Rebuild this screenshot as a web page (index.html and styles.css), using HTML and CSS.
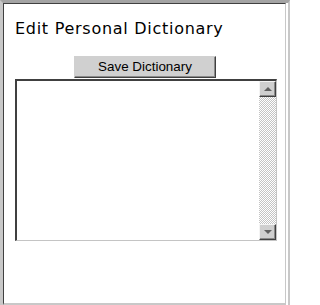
FILE: index.html
```html
<!DOCTYPE html>
<html>
<head>
<meta charset="utf-8">
<link rel="stylesheet" href="styles.css">
</head>
<body>
<div class="frame">
  <div class="panel">
    <h1 class="title">Edit Personal Dictionary</h1>
    <div class="actions">
      <button class="btn" type="button">Save Dictionary</button>
    </div>
    <div class="editor">
      <div class="editor-area"></div>
      <div class="scrollbar">
        <div class="sb-btn"><span class="arrow up"></span></div>
        <div class="sb-track"></div>
        <div class="sb-btn"><span class="arrow down"></span></div>
      </div>
    </div>
  </div>
</div>
</body>
</html>
```
FILE: styles.css
```css
html, body {
  margin: 0;
  padding: 0;
  background: #ffffff;
}
body {
  width: 290px;
  height: 305px;
  overflow: hidden;
}
.frame {
  box-sizing: border-box;
  width: 290px;
  height: 305px;
  border-top: 3px solid #a4a4a4;
  border-left: 3px solid #c8c8c8;
  border-right: 2px solid #c8c8c8;
  padding-right: 2px;
  background: #ffffff;
  display: flex;
}
.panel {
  box-sizing: border-box;
  flex: 1;
  border-top: 1px solid #404040;
  border-left: 1px solid #404040;
  border-right: 1px solid #c8c8c8;
  border-bottom: 2px solid #c8c8c8;
  padding: 15px 8px 0 11px;
  display: flex;
  flex-direction: column;
}
.title {
  margin: 0;
  font-family: "DejaVu Sans", Verdana, sans-serif;
  font-weight: normal;
  font-size: 16px;
  line-height: 19px;
  letter-spacing: 0.72px;
  color: #000000;
}
.actions {
  margin-top: 18px;
  display: flex;
  padding-left: 59px;
}
.btn {
  box-sizing: border-box;
  width: 142px;
  height: 22px;
  margin: 0;
  padding: 0 0 1px 0;
  background: #d0d0d0;
  border-style: solid;
  border-width: 1px;
  border-color: #d0d0d0 #404040 #404040 #d0d0d0;
  box-shadow: inset -1px -1px 0 #8a8a8a;
  font-family: "Liberation Sans", Arial, sans-serif;
  font-size: 13.4px;
  color: #000000;
}
.editor {
  box-sizing: border-box;
  margin-top: 1px;
  width: 262px;
  height: 162px;
  border-top: 2px solid #404040;
  border-left: 2px solid #404040;
  border-right: 1px solid #c4c4c4;
  border-bottom: 1px solid #c4c4c4;
  display: flex;
  background: #ffffff;
}
.editor-area {
  flex: 1;
}
.scrollbar {
  width: 17px;
  display: flex;
  flex-direction: column;
}
.sb-btn {
  box-sizing: border-box;
  height: 16px;
  background: #cfcfcf;
  border-style: solid;
  border-width: 1px;
  border-color: #f4f4f4 #404040 #404040 #f4f4f4;
  box-shadow: inset -1px -1px 0 #8a8a8a;
  display: flex;
  align-items: center;
  justify-content: center;
}
.sb-track {
  flex: 1;
  background: repeating-conic-gradient(#c4c4c4 0 25%, #ffffff 0 50%) 0 0 / 2px 2px;
}
.arrow {
  width: 0;
  height: 0;
  border-left: 4px solid transparent;
  border-right: 4px solid transparent;
}
.arrow.up {
  border-bottom: 4px solid #606060;
  margin-top: -1px;
}
.arrow.down {
  border-top: 4px solid #606060;
  margin-top: -1px;
}
```
